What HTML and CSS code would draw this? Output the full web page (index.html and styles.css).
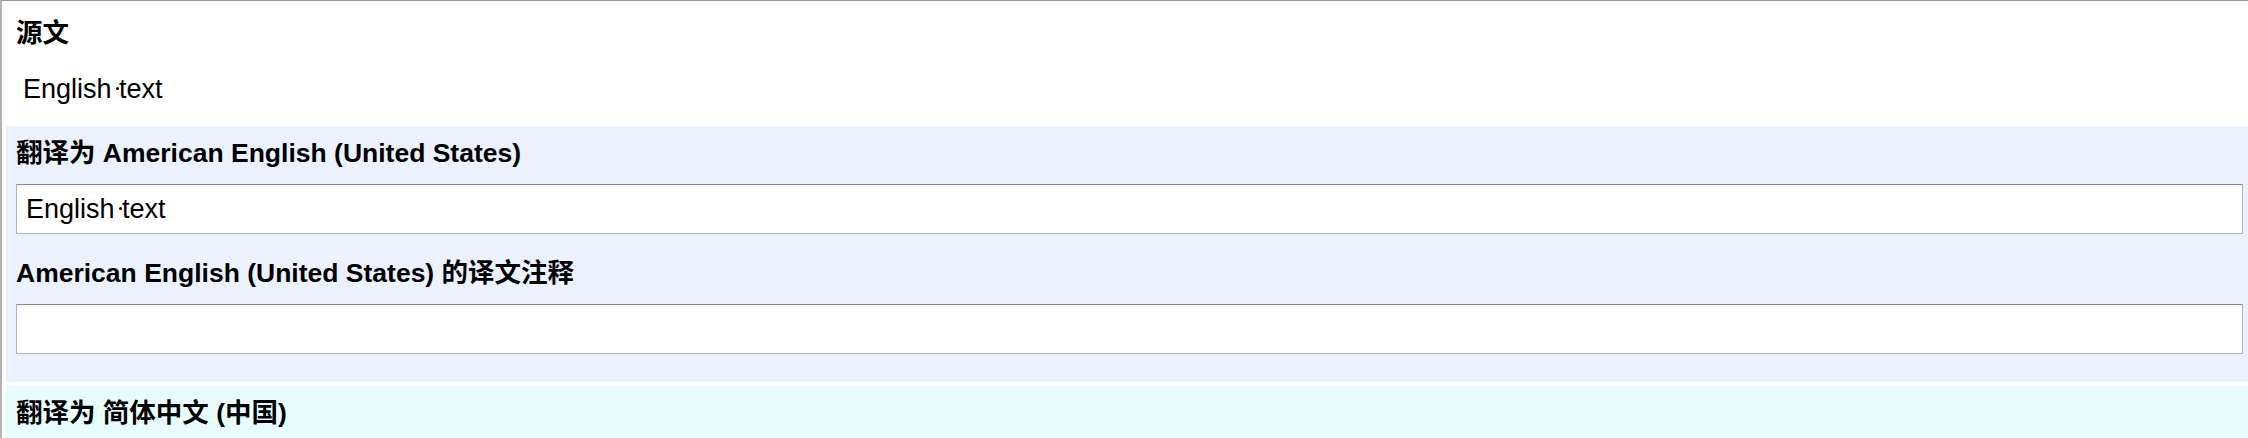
FILE: index.html
```html
<!DOCTYPE html>
<html lang="zh-CN">
<head>
<meta charset="utf-8">
<title>翻译</title>
<link rel="stylesheet" href="styles.css">
</head>
<body>
<div class="frame">
  <section class="source">
    <h2 class="label">源文</h2>
    <div class="source-text">English<span class="ws"> </span>text</div>
  </section>
  <section class="target target-en">
    <h2 class="label">翻译为 American English (United States)</h2>
    <div class="field"><span class="field-text">English<span class="ws"> </span>text</span></div>
    <h2 class="label label-note">American English (United States) 的译文注释</h2>
    <div class="field"></div>
  </section>
  <section class="target target-zh">
    <h2 class="label">翻译为 简体中文 (中国)</h2>
  </section>
</div>
</body>
</html>
```
FILE: styles.css
```css
html, body {
  margin: 0;
  padding: 0;
  background: #ffffff;
}
body {
  font-family: "Liberation Sans", "Noto Sans CJK SC", sans-serif;
  color: #000;
  height: 438px;
  overflow: hidden;
}
.frame {
  border-top: 1px solid #9a9a9a;
  border-left: 2px solid #b3b3b3;
  padding-left: 4px;
  height: 437px;
  overflow: hidden;
}
.label {
  margin: 0;
  font-size: 26.5px;
  line-height: 32px;
  font-weight: bold;
  white-space: nowrap;
}
.source {
  padding: 16px 5px 21px 10px;
}
.source-text {
  margin-top: 24px;
  padding-left: 7px;
  font-size: 27px;
  line-height: 32px;
  white-space: pre;
}
.ws {
  position: relative;
  white-space: pre;
}
.ws::after {
  content: "";
  position: absolute;
  right: 0;
  top: 13px;
  width: 3px;
  height: 3px;
  border-radius: 50%;
  background: #000;
}
.target {
  padding: 11px 5px 28px 10px;
}
.target-en {
  background: #ebf2fe;
}
.target-zh {
  margin-top: 4px;
  background: #e8fefe;
}
.field {
  margin-top: 15px;
  box-sizing: border-box;
  height: 50px;
  display: flex;
  align-items: center;
  padding: 0 9px;
  background: #fff;
  border: 1px solid #b4b4b4;
  border-top-color: #8c8c8c;
  font-size: 27px;
  line-height: 32px;
}
.field-text {
  white-space: pre;
}
.label-note {
  margin-top: 23px;
}
```
